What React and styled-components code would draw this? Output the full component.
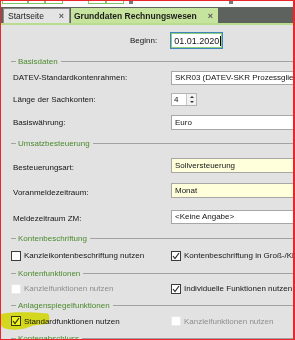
import styled, { createGlobalStyle } from 'styled-components';

const GlobalStyle = createGlobalStyle`
  html, body {
    margin: 0;
    padding: 0;
    background: #ffffff;
  }
  body {
    font-family: "Liberation Sans", Arial, sans-serif;
  }
`;

const Frame = styled.div`
  position: relative;
  box-sizing: border-box;
  width: 295px;
  height: 340px;
  border: 1px solid #e8262b;
  border-right-width: 2px;
  overflow: hidden;
  background: #e2e2e2;
  display: flex;
  flex-direction: column;
`;

const TopStrip = styled.div`
  height: 6px;
  flex: none;
  background: #fbfbfb;
  display: flex;
  align-items: flex-start;
  gap: 0;
`;

const ToolBox = styled.div`
  height: 2px;
  width: ${(p) => p.w}px;
  margin-left: ${(p) => p.ml || 0}px;
  border: 1px solid #7cc36a;
  border-top: none;
  background: #ffffff;
`;

const ToolKnob = styled.div`
  width: 4px;
  height: 3px;
  margin-left: ${(p) => p.ml || 0}px;
  background: #777;
`;

const TabBar = styled.div`
  height: 16px;
  flex: none;
  background: #5e625f;
  display: flex;
  align-items: stretch;
  padding-left: 2px;
  gap: 1px;
`;

const Tab = styled.div`
  box-sizing: border-box;
  width: ${(p) => p.w}px;
  display: flex;
  align-items: center;
  justify-content: space-between;
  padding: 0 5px 0 ${(p) => (p.active ? 3 : 4)}px;
  font-size: 8.5px;
  font-weight: ${(p) => (p.active ? 700 : 400)};
  color: #1d1d1d;
  background: ${(p) => (p.active ? '#c6e49e' : '#e4e4e4')};
  border: ${(p) => (p.active ? 'none' : '1px solid #8a8a8a')};
  border-bottom: none;
  margin-top: 1px;
`;

const Close = styled.span`
  font-size: 9px;
  font-weight: 700;
  color: #5a5a5a;
`;

const GreenStrip = styled.div`
  height: 2px;
  flex: none;
  background: #b9dc8e;
`;

const Content = styled.div`
  position: relative;
  padding-left: 10px;
  display: flex;
  flex-direction: column;
  font-size: 8px;
  color: #141414;
`;

const BeginnRow = styled.div`
  height: 31px;
  display: flex;
  align-items: center;
  padding-left: 119px;
  gap: 13px;
`;

const DateInput = styled.div`
  box-sizing: border-box;
  width: 53px;
  height: 17px;
  border: 1px solid #3f86c0;
  box-shadow: inset 0 0 0 1px #8fcc7a;
  background: #ffffff;
  display: flex;
  align-items: center;
  padding-left: 3px;
  font-size: 9px;
`;

const Caret = styled.span`
  display: inline-block;
  width: 1px;
  height: 10px;
  background: #000;
  margin-left: 1px;
`;

const Legend = styled.div`
  height: ${(p) => p.h}px;
  flex: none;
  display: flex;
  align-items: center;
  color: #4a8a2c;
  font-size: 8px;
  &::before {
    content: '';
    width: 5px;
    height: 1px;
    background: #a2a2a2;
    margin-right: 2px;
  }
  &::after {
    content: '';
    flex: 1;
    height: 1px;
    background: #a2a2a2;
    margin-left: 3px;
  }
`;

const Row = styled.div`
  height: ${(p) => p.h}px;
  flex: none;
  display: grid;
  grid-template-columns: 158px 1fr;
  align-items: center;
  padding-left: 2px;
`;

const Label = styled.span`
  white-space: nowrap;
  padding-top: ${(p) => p.dy || 0}px;
`;

const Select = styled.div`
  box-sizing: border-box;
  width: 200px;
  height: ${(p) => p.h || 14}px;
  background: ${(p) => (p.yellow ? '#ffffdc' : '#ffffff')};
  border: 1px solid #a7a7a7;
  display: flex;
  align-items: center;
  padding-left: 3px;
  white-space: nowrap;
`;

const Spinner = styled.div`
  box-sizing: border-box;
  width: 26px;
  height: 13px;
  background: #ffffff;
  border: 1px solid #b4b4b4;
  display: flex;
  align-items: center;
  justify-content: space-between;
  padding-left: 2px;
`;

const SpinButtons = styled.div`
  box-sizing: border-box;
  width: 10px;
  height: 100%;
  border-left: 1px solid #c8c8c8;
  background: #f2f2f2;
  display: flex;
  flex-direction: column;
  align-items: center;
  justify-content: space-around;
`;

const Arrow = styled.span`
  width: 0;
  height: 0;
  border-left: 2px solid transparent;
  border-right: 2px solid transparent;
  ${(p) => (p.down ? 'border-top: 2px solid #333;' : 'border-bottom: 2px solid #333;')}
`;

const CheckRow = styled.div`
  height: ${(p) => p.h}px;
  flex: none;
  display: grid;
  grid-template-columns: 160px 1fr;
  align-items: center;
  padding-left: 0;
`;

const CheckItem = styled.div`
  display: flex;
  align-items: center;
  gap: 3px;
  white-space: nowrap;
  color: ${(p) => (p.disabled ? '#8e8e8e' : '#161616')};
`;

const Box = styled.span`
  box-sizing: border-box;
  width: 10px;
  height: 10px;
  flex: none;
  background: #ffffff;
  border: 1px solid ${(p) => (p.disabled ? '#e9e9e9' : '#3a3a3a')};
  display: flex;
  align-items: center;
  justify-content: center;
`;

const Highlight = styled.svg`
  position: absolute;
  left: -2px;
  top: 286px;
  width: 52px;
  height: 20px;
  mix-blend-mode: multiply;
  pointer-events: none;
`;

const Check = ({ checked, disabled, children }) => (
  <CheckItem disabled={disabled}>
    <Box disabled={disabled}>
      {checked && (
        <svg width="8" height="8" viewBox="0 0 8 8">
          <polyline points="1,4 3,6.5 7,1" fill="none" stroke="#2a2a2a" strokeWidth="1.2" />
        </svg>
      )}
    </Box>
    {children}
  </CheckItem>
);

const App = () => {
  return (
    <Frame>
      <GlobalStyle />
      <TopStrip>
        <ToolBox w={24} ml={1} />
        <ToolBox w={15} />
        <ToolBox w={16} />
        <ToolBox w={16} ml={25} />
        <ToolBox w={16} />
        <ToolKnob ml={5} />
        <ToolKnob ml={96} />
      </TopStrip>
      <TabBar>
        <Tab w={67}>
          <span>Startseite</span>
          <Close>×</Close>
        </Tab>
        <Tab w={147} active>
          <span>Grunddaten Rechnungswesen</span>
          <Close>×</Close>
        </Tab>
      </TabBar>
      <GreenStrip />
      <Content>
        <BeginnRow>
          <Label>Beginn:</Label>
          <DateInput>
            01.01.2020
            <Caret />
          </DateInput>
        </BeginnRow>

        <Legend h={10}>Basisdaten</Legend>
        <Row h={23}>
          <Label>DATEV-Standardkontenrahmen:</Label>
          <Select>SKR03 (DATEV-SKR Prozessgliederung)</Select>
        </Row>
        <Row h={21}>
          <Label>Länge der Sachkonten:</Label>
          <Spinner>
            4
            <SpinButtons>
              <Arrow />
              <Arrow down />
            </SpinButtons>
          </Spinner>
        </Row>
        <Row h={25}>
          <Label>Basiswährung:</Label>
          <Select h={15}>Euro</Select>
        </Row>

        <Legend h={17}>Umsatzbesteuerung</Legend>
        <Row h={27}>
          <Label dy={3}>Besteuerungsart:</Label>
          <Select h={15} yellow>
            Sollversteuerung
          </Select>
        </Row>
        <Row h={23}>
          <Label dy={3}>Voranmeldezeitraum:</Label>
          <Select h={15} yellow>
            Monat
          </Select>
        </Row>
        <Row h={29}>
          <Label dy={3}>Meldezeitraum ZM:</Label>
          <Select>&lt;Keine Angabe&gt;</Select>
        </Row>

        <Legend h={15}>Kontenbeschriftung</Legend>
        <CheckRow h={19}>
          <Check>Kanzleikontenbeschriftung nutzen</Check>
          <Check checked>Kontenbeschriftung in Groß-/Kleinschreibung</Check>
        </CheckRow>

        <Legend h={16}>Kontenfunktionen</Legend>
        <CheckRow h={15}>
          <Check disabled>Kanzleifunktionen nutzen</Check>
          <Check checked>Individuelle Funktionen nutzen</Check>
        </CheckRow>

        <Legend h={19}>Anlagenspiegelfunktionen</Legend>
        <CheckRow h={12}>
          <Check checked>Standardfunktionen nutzen</Check>
          <Check disabled>Kanzleifunktionen nutzen</Check>
        </CheckRow>

        <Legend h={22}>Kontenabschluss</Legend>

        <Highlight viewBox="0 0 52 20">
          <path
            d="M2 3 C12 0.5, 32 1, 49 2.5 C51 5, 51 10, 48 13 C40 13.5, 34 14, 30 16 C22 19.5, 8 19.5, 3 16 C0.5 12, 0.5 6, 2 3 Z"
            fill="#eef20a"
            opacity="0.9"
          />
        </Highlight>
      </Content>
    </Frame>
  );
};

export default App;
